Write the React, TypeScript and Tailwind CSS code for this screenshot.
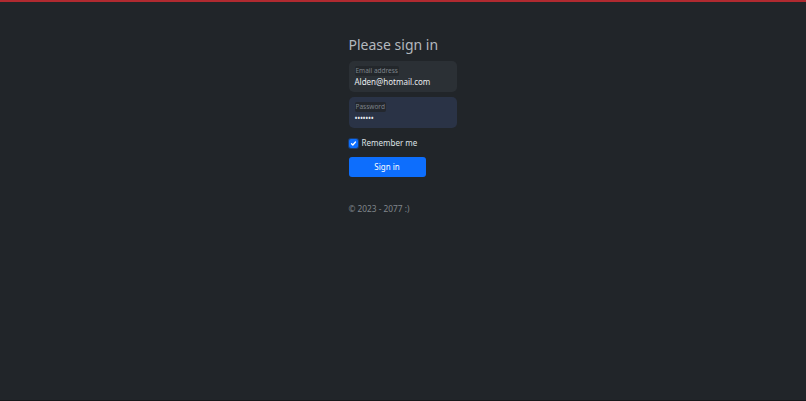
import React from "react";

export default function App() {
  return (
    <div className="h-[401px] w-full bg-[#212529] flex flex-col" style={{ fontFamily: '"Noto Sans", "Open Sans", sans-serif' }}>
      <div className="h-[2px] bg-[#b02a30] shrink-0" />
      <div className="flex-1 flex justify-center">
        <div className="w-[108px] ml-[-1px] pt-[32px] flex flex-col">
          <h1 className="text-[14px] leading-[22px] text-[#b3b8be] font-normal whitespace-nowrap">Please sign in</h1>
          <div className="mt-[5px] h-[31px] rounded-[5px] bg-[#2b3035] px-[6px] pt-[5px] flex flex-col">
            <span className="self-start text-[6.5px] leading-[10px] text-[#7d838a] bg-[#23272b] rounded-[2px] px-[1px]">Email address</span>
            <span className="text-[8px] leading-[12px] text-[#e9ecef]">Alden@hotmail.com</span>
          </div>
          <div className="mt-[5px] h-[31px] rounded-[5px] bg-[#2a3346] px-[6px] pt-[5px] flex flex-col">
            <span className="self-start text-[6.5px] leading-[10px] text-[#7d838a] bg-[#23272e] rounded-[2px] px-[1px]">Password</span>
            <span className="text-[8px] leading-[12px] text-[#e9ecef] tracking-[-0.3px]">•••••••</span>
          </div>
          <label className="mt-[9px] flex items-center gap-[4px]">
            <span className="w-[9px] h-[9px] rounded-[2px] bg-[#0d6efd] flex items-center justify-center shadow-[0_0_0_1px_rgba(13,110,253,0.35)]">
              <svg viewBox="0 0 16 16" className="w-[7px] h-[7px]" fill="none" stroke="#fff" strokeWidth="3" strokeLinecap="round" strokeLinejoin="round">
                <path d="M3.5 8.5l3 3 6-7" />
              </svg>
            </span>
            <span className="text-[8px] leading-[12px] text-[#dee2e6]">Remember me</span>
          </label>
          <button className="mt-[8px] w-[77px] h-[20px] rounded-[3px] bg-[#0d6efd] text-white text-[8px] leading-[12px]">Sign in</button>
          <p className="mt-[26px] text-[8.3px] leading-[12px] text-[#80868c]">© 2023 - 2077 :)</p>
        </div>
      </div>
      <div className="h-[1px] bg-[#16181b] shrink-0" />
    </div>
  );
}
